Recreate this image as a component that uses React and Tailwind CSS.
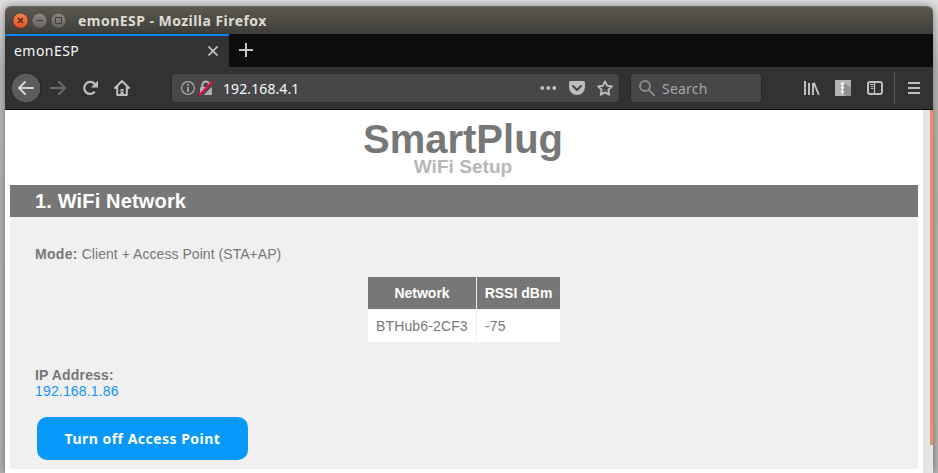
const ui = "font-['Noto_Sans','Open_Sans',sans-serif]";

function TitleBar() {
  return (
    <header className="flex h-7 shrink-0 items-center rounded-t-[6px] border-t border-[#6a6860] bg-linear-to-b from-[#5b594f] to-[#3e3d38] pl-[7px]">
      <svg className="h-4 w-[55px] shrink-0" viewBox="0 0 55 16" fill="none">
        <defs>
          <linearGradient id="close" x1="0" y1="0" x2="0" y2="1">
            <stop offset="0" stopColor="#f4804f" />
            <stop offset="1" stopColor="#e2521f" />
          </linearGradient>
          <linearGradient id="ctl" x1="0" y1="0" x2="0" y2="1">
            <stop offset="0" stopColor="#8b8982" />
            <stop offset="1" stopColor="#66645d" />
          </linearGradient>
        </defs>
        <circle cx="8.5" cy="7.7" r="7.6" fill="url(#close)" stroke="#35332e" strokeWidth=".6" />
        <circle cx="27.5" cy="7.7" r="7.6" fill="url(#ctl)" stroke="#35332e" strokeWidth=".6" />
        <circle cx="46.5" cy="7.7" r="7.6" fill="url(#ctl)" stroke="#35332e" strokeWidth=".6" />
        <path d="m6 5 5 5m0-5-5 5" stroke="#4a2418" strokeWidth="1.2" />
        <path d="M24 7.5h7M43.5 4.5h6v6h-6z" stroke="#3d3b36" />
      </svg>
      <span className={`${ui} ml-[11px] whitespace-nowrap text-[14px] leading-5 font-bold tracking-[0.46px] text-[#dfdbd2]`}>
        emonESP - Mozilla Firefox
      </span>
    </header>
  );
}

function TabStrip() {
  return (
    <div className="flex h-[33px] shrink-0 bg-[#0c0c0d]">
      <div className="flex w-56 items-center justify-between border-t-2 border-[#0a84ff] bg-[#323234] pr-[11px] pl-[9px]">
        <span className={`${ui} -mt-[2px] text-[14px] leading-5 tracking-[0.45px] text-[#f9f9fa]`}>emonESP</span>
        <svg className="-mt-px size-[10px]" viewBox="0 0 10 10" fill="none" stroke="#c3c3c4" strokeWidth="1.6">
          <path d="m.5.5 9 9m0-9-9 9" />
        </svg>
      </div>
      <svg className="mt-[9px] ml-[10px] size-[14px]" viewBox="0 0 14 14" fill="none" stroke="#c6c6c7" strokeWidth="2">
        <path d="M7 0v14M0 7h14" />
      </svg>
    </div>
  );
}

function NavIcons() {
  return (
    <svg className="h-8 w-[130px] shrink-0" viewBox="0 0 130 32" fill="none" stroke="#bebebf" strokeWidth="2" strokeLinejoin="round" strokeLinecap="round">
      <circle cx="16" cy="16" r="15" fill="#5c5c5e" stroke="#252526" strokeWidth="1" />
      <path d="M23 16H9m6-6-6 6 6 6" stroke="#d3d3d4" />
      <path d="M41 16h14m-6-6 6 6-6 6" stroke="#6a6a6c" />
      <path d="M84.8 19.8A6 6 0 1 1 84.6 11.8l1.4 1.4" strokeWidth="2.2" strokeLinecap="butt" />
      <path d="M88 8.5V15.5h-7z" fill="#bebebf" stroke="none" />
      <path d="m105 16 7-7 7 7m-11.8-1.5V23h9.6v-8.5" />
      <path d="M110.5 17h3v6h-3z" fill="#bebebf" stroke="none" />
      <path d="M112 18.5v1.5" stroke="#323234" strokeWidth="1" strokeLinecap="butt" />
    </svg>
  );
}

function AddressBar() {
  return (
    <div className="ml-[31px] flex h-[30px] w-[449px] items-center rounded-[4px] border border-[#29292b] bg-[#474749] pr-[5px] pl-[8px]">
      <svg className="h-4 w-[35px] shrink-0" viewBox="0 0 35 16" fill="none">
        <circle cx="8" cy="8" r="6.4" stroke="#aaaaab" strokeWidth="1.2" />
        <path d="M8 7v5M8 4v1.8" stroke="#aaaaab" strokeWidth="1.7" />
        <path d="M22.4 7V4.8a3.4 3.4 0 0 1 6.8 0V7" stroke="#b1b1b3" strokeWidth="2" />
        <rect x="20" y="7" width="12" height="8" rx="1.3" fill="#b1b1b3" />
        <path d="M21 16 33.5 3" stroke="#474749" strokeWidth="2.6" />
        <path d="M19.5 15 32.5 1.5" stroke="#ed083f" strokeWidth="2" />
      </svg>
      <span className={`${ui} mt-[2px] ml-[8px] text-[14px] leading-5 tracking-[0.1px] text-[#f9f9fa]`}>192.168.4.1</span>
      <svg className="ml-auto h-4 w-[74px] shrink-0" viewBox="0 0 74 16" fill="none">
        <g fill="#bdbdbe">
          <circle cx="2.3" cy="8" r="2" />
          <circle cx="8.3" cy="8" r="2" />
          <circle cx="14.3" cy="8" r="2" />
          <path d="M30.5 1h13Q45 1 45 2.5V7a8 8 0 0 1-16 0V2.5Q29 1 30.5 1Z" />
        </g>
        <path d="m33 6 4 4 4-4" stroke="#474749" strokeWidth="2" strokeLinecap="round" strokeLinejoin="round" />
        <path d="m65 1.4 2.1 4.3 4.8.7-3.5 3.4.8 4.9-4.2-2.3-4.2 2.3.8-4.9-3.5-3.4 4.8-.7Z" stroke="#bdbdbe" strokeWidth="1.9" strokeLinejoin="round" />
      </svg>
    </div>
  );
}

function ToolIcons() {
  return (
    <svg className="ml-auto h-8 w-[129px] shrink-0" viewBox="0 0 129 32" fill="none" stroke="#bebebf">
      <path d="M1 9v14M5 11v12M9 11v12" strokeWidth="2" />
      <path d="m9.8 10.6 5 12.2" strokeWidth="1.9" />
      <path d="M31 8h16v16H31z" fill="#b4b4b5" stroke="none" />
      <path d="m41 11 6 4.5V24h-5l-4-4z" fill="#909092" stroke="none" />
      <path d="M38.5 10v9" stroke="#fff" strokeWidth="1" />
      <path d="M36.5 11h4l-2 3zm0 4h4l-2 3zm0 4h4l-2 3z" fill="#fff" stroke="none" />
      <rect x="64" y="10" width="14" height="12" rx="2" strokeWidth="2" />
      <path d="M70.5 10v12" strokeWidth="1.2" />
      <path d="M66 12.5h3.5m-2.5 2h2.5m-2.5 2h2.5" />
      <path d="M90.5 0v32" stroke="#5b5b5d" />
      <path d="M104 11h12M104 16h12M104 21h12" strokeWidth="2" />
    </svg>
  );
}

function Toolbar() {
  return (
    <div className="flex h-[43px] shrink-0 items-center border-b border-[#0c0c0d] bg-[#323234] pl-[5px]">
      <NavIcons />
      <AddressBar />
      <div className="ml-[10px] flex h-[30px] w-[132px] items-center rounded-[4px] border border-[#29292b] bg-[#474749] pl-[8px]">
        <svg className="size-4" viewBox="0 0 16 16" fill="none" stroke="#8c8c8e" strokeWidth="1.9" strokeLinecap="round">
          <circle cx="6" cy="6" r="5" />
          <path d="m9.8 9.8 5.2 5.2" />
        </svg>
        <span className={`${ui} mt-[2px] ml-[7px] text-[14px] leading-5 tracking-[0.2px] text-[#a5a5a6]`}>Search</span>
      </div>
      <ToolIcons />
    </div>
  );
}

function WifiPage() {
  return (
    <main className="flex min-w-0 flex-1 flex-col px-[5px] pt-[9px] font-['Liberation_Sans',Arial,sans-serif] text-[#777]">
      <h1 className="pr-[2px] text-center text-[40px] leading-[40px] font-bold">SmartPlug</h1>
      <h2 className="-mt-[2px] pr-[2px] text-center text-[19px] leading-5 font-bold tracking-[0.05px] text-[#b7b7b7]">WiFi Setup</h2>
      <h3 className="mt-[8px] h-8 bg-[#777] pl-[25px] text-[20px] leading-8 font-bold tracking-[0.16px] text-white">1. WiFi Network</h3>
      <section className="h-[252px] bg-[#f0f0f0] px-[25px] pt-[29px] text-[14px] leading-4">
        <p className="tracking-[0.05px]"><b className="tracking-[0.3px]">Mode:</b> Client + Access Point (STA+AP)</p>
        <table className="mt-[15px] ml-[333px] border-separate border-spacing-0">
          <thead>
            <tr className="h-[33px] text-white">
              <th className="w-[109px] border-r border-b border-[#f0f0f0] bg-[#777] p-0">Network</th>
              <th className="w-[83px] border-b border-[#f0f0f0] bg-[#777] p-0">RSSI dBm</th>
            </tr>
          </thead>
          <tbody>
            <tr className="h-8 bg-white">
              <td className="h-8 border-r border-[#f0f0f0] p-0 pl-2 tracking-[0.14px]">BTHub6-2CF3</td>
              <td className="p-0 pl-2 tracking-[0.14px]">-75</td>
            </tr>
          </tbody>
        </table>
        <p className="mt-[25px] font-bold tracking-[0.16px]">IP Address:</p>
        <a className="block tracking-[0.16px] text-[#1395f8]">192.168.1.86</a>
        <button className={`${ui} mt-[18px] ml-[2px] block h-[43px] w-[211px] rounded-[10px] bg-[#0699fa] text-[14px] leading-5 font-bold tracking-[0.48px] text-white`}>
          Turn off Access Point
        </button>
      </section>
    </main>
  );
}

export default function App() {
  return (
    <div className="flex h-[473px] w-[938px] overflow-hidden bg-linear-to-b from-[#e0e0e0] via-[#b9b9b9] via-15% to-[#b3b3b3] px-[5px] pt-[6px]">
      <div className="flex w-[928px] flex-col rounded-t-[6px] shadow-[0_0_9px_rgba(0,0,0,0.4)]">
        <TitleBar />
        <TabStrip />
        <Toolbar />
        <div className="flex min-h-0 flex-1 bg-white">
          <WifiPage />
          <div className="flex w-[10px] justify-end bg-[#e5e5e5]">
            <div className="h-[335px] w-[3px] bg-[#f08d68]" />
          </div>
        </div>
      </div>
    </div>
  );
}
